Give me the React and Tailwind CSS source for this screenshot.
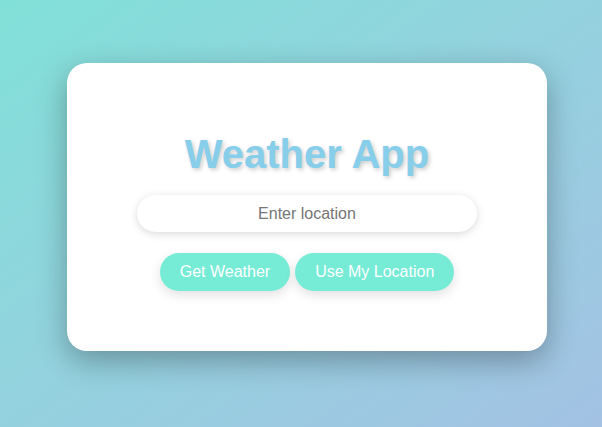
import React from 'react';

export default function App() {
  return (
    <div
      className="w-[602px] h-[427px] pt-[63px] pl-[67px] bg-gradient-to-br from-[#80e0d8] to-[#a3c2e4]"
      style={{ fontFamily: '"Liberation Sans", Arial, sans-serif' }}
    >
      <div className="w-[480px] h-[288px] bg-white rounded-[20px] shadow-[0_10px_30px_rgba(0,0,0,0.3)] flex flex-col items-center pt-[68px]">
        <h1 className="text-[40px] leading-[46px] font-bold text-[#87ceeb] [text-shadow:2px_2px_4px_rgba(0,0,0,0.2)]">
          Weather App
        </h1>
        <input
          type="text"
          placeholder="Enter location"
          className="mt-[18px] w-[340px] h-[37px] rounded-full bg-white text-center text-[16px] text-[#333] placeholder:text-[#757575] outline-none shadow-[0_2px_8px_rgba(0,0,0,0.15)]"
        />
        <div className="mt-[21px] flex gap-[5px]">
          <button className="px-5 py-[10px] leading-[18px] text-[16px] text-white bg-[#76ebd5] rounded-full shadow-[0_4px_12px_rgba(0,0,0,0.12)]">
            Get Weather
          </button>
          <button className="px-5 py-[10px] leading-[18px] text-[16px] text-white bg-[#76ebd5] rounded-full shadow-[0_4px_12px_rgba(0,0,0,0.12)]">
            Use My Location
          </button>
        </div>
      </div>
    </div>
  );
}
